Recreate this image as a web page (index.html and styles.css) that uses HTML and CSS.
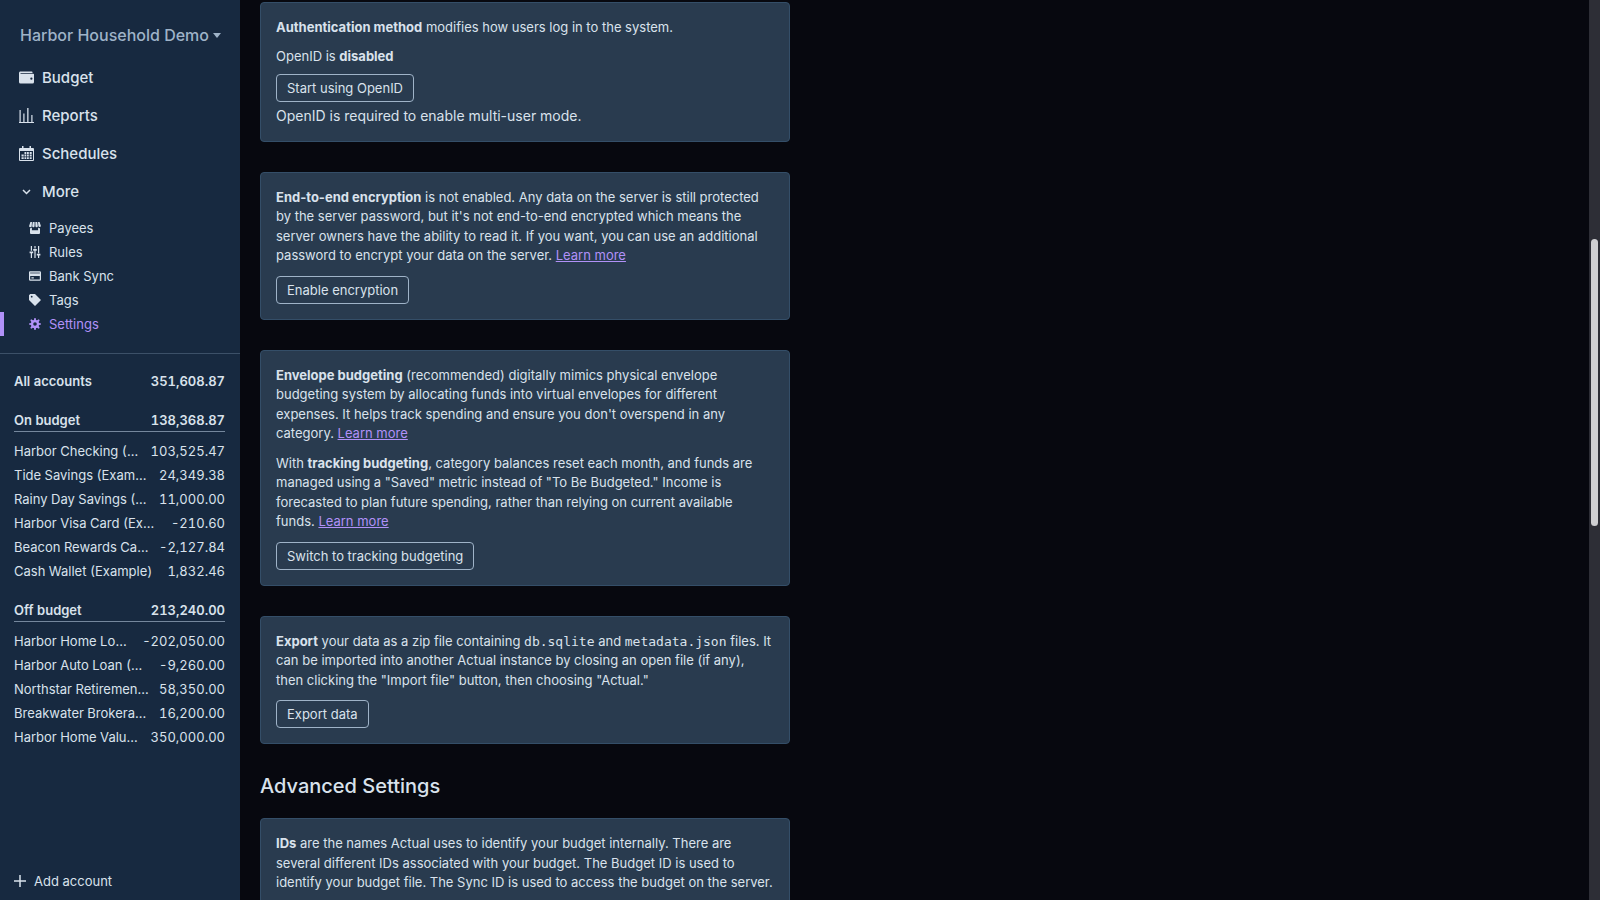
FILE: index.html
```html
<!DOCTYPE html>
<html lang="en">
<head>
  <meta charset="UTF-8" />
  <meta name="viewport" content="width=device-width, initial-scale=1.0" />
  <title>Settings - Actual</title>
  <link rel="stylesheet" href="styles.css">
</head>
<body>
  <aside class="sidebar">
    <button class="budget-name">
      Harbor Household Demo
      <svg width="8" height="5" viewBox="0 0 8 5"><path d="M0 0h8L4 5z" /></svg>
    </button>

    <nav>
      <a class="nav-item" href="#budget">
        <svg width="15" height="15" viewBox="0 0 20 20"><path fill-rule="evenodd" d="M0 4c0-1.1.9-2 2-2h15a1 1 0 0 1 1 1v1H2v1h17a1 1 0 0 1 1 1v10a2 2 0 0 1-2 2H2a2 2 0 0 1-2-2V4zm16.5 9a1.5 1.5 0 1 0 0-3 1.5 1.5 0 0 0 0 3z" /></svg>
        Budget
      </a>
      <a class="nav-item" href="#reports">
        <svg width="15" height="15" viewBox="0 0 15 15"><path d="M0 14h15v1H0zM.5 2h1.2v12H.5zM4.300 5.500h1.200V14H4.300zM8.200 0h1.300v14H8.200zM12.300 7h1.200v7h-1.200z" /></svg>
        Reports
      </a>
      <a class="nav-item" href="#schedules">
        <svg width="15" height="15" viewBox="0 0 15 15"><path fill-rule="evenodd" d="M3 0h1.500v2h6V0H12v2h2a1 1 0 0 1 1 1v11a1 1 0 0 1-1 1H1a1 1 0 0 1-1-1V3a1 1 0 0 1 1-1h2zM1 5v9h13V5z" /><path d="M5.500 6h1.800v2H5.500zM8 6h1.800v2H8zM10.700 6h2v2h-2zM2.500 8.600h2.200v1.900H2.500zM5.500 8.600h1.800v1.900H5.500zM8 8.600h1.800v1.900H8zM10.700 8.600h2v1.900h-2zM2.500 11.200h2.200v1.800H2.500zM5.500 11.200h1.800v1.800H5.500zM8 11.200h1.800v1.800H8zM10.700 11.200h2v1.800h-2z" /></svg>
        Schedules
      </a>
      <button class="nav-item">
        <svg width="15" height="15" viewBox="0 0 15 15"><path class="stroke" d="M4 6l3.500 3.500L11 6" /></svg>
        More
      </button>
      <div class="sub-nav">
        <a class="sub-item" href="#payees">
          <svg width="12" height="12" viewBox="0 0 12 12"><path d="M1.400 0h1.600L2.700 4a1.300 1.300 0 0 1-2.600 0zM3.800 0h1.800v4a1.200 1.200 0 0 1-2.400 0zM6.400 0h1.800l.6 4a1.200 1.200 0 0 1-2.400 0zM9 0h1.600l1.300 4a1.300 1.300 0 0 1-2.500 0zM1 6.200c.8.100 1.300-.1 1.900-.6v2.600h6.200V5.600c.6.500 1.100.7 1.900.6V11a1 1 0 0 1-1 1H2a1 1 0 0 1-1-1z" /></svg>
          Payees
        </a>
        <a class="sub-item" href="#rules">
          <svg width="12" height="12" viewBox="0 0 20 20"><path d="M17 16v4h-2v-4h-2v-3h6v3h-2zM1 9h6v3H1V9zm6-4h6v3H7V5zM3 0h2v8H3V0zm12 0h2v12h-2V0zM9 0h2v4H9V0zM3 12h2v8H3v-8zm6-4h2v12H9V8z" /></svg>
          Rules
        </a>
        <a class="sub-item" href="#bank-sync">
          <svg width="12" height="12" viewBox="0 0 20 20"><path d="M18 6V4H2v2h16zm0 4H2v6h16v-6zM0 4c0-1.100.900-2 2-2h16a2 2 0 0 1 2 2v12a2 2 0 0 1-2 2H2a2 2 0 0 1-2-2V4zm4 8h4v2H4v-2z" /><path opacity=".5" d="M2 4h16v2H2z" /></svg>
          Bank Sync
        </a>
        <a class="sub-item" href="#tags">
          <svg width="12" height="12" viewBox="0 0 20 20"><path d="M0 10V2l2-2h8l10 10-10 10L0 10zm4.500-4a1.500 1.500 0 1 0 0-3 1.500 1.500 0 0 0 0 3z" /></svg>
          Tags
        </a>
        <a class="sub-item active" href="#settings">
          <svg width="12" height="12" viewBox="0 0 20 20"><path d="M3.940 6.500L2.220 3.640l1.420-1.420L6.500 3.940c.520-.300 1.100-.540 1.700-.700L9 0h2l.800 3.240c.600.160 1.180.400 1.700.700l2.860-1.720 1.420 1.420-1.720 2.860c.300.520.540 1.100.700 1.700L20 9v2l-3.240.800c-.160.600-.400 1.180-.700 1.700l1.720 2.860-1.420 1.420-2.860-1.720c-.520.300-1.100.540-1.700.700L11 20H9l-.800-3.240c-.600-.160-1.180-.400-1.700-.700l-2.860 1.720-1.420-1.420 1.720-2.860c-.300-.520-.540-1.100-.700-1.700L0 11V9l3.240-.800c.160-.600.400-1.180.700-1.700zM10 13a3 3 0 1 0 0-6 3 3 0 0 0 0 6z" /></svg>
          Settings
        </a>
      </div>
    </nav>

    <div class="accounts">
      <a class="account total" href="#all"><span class="name">All accounts</span><span>351,608.87</span></a>

      <a class="account total group" href="#on-budget"><span class="name">On budget</span><span>138,368.87</span></a>
      <a class="account" href="#a1"><span class="name">Harbor Checking (Example)</span><span>103,525.47</span></a>
      <a class="account" href="#a2"><span class="name">Tide Savings (Example)</span><span>24,349.38</span></a>
      <a class="account" href="#a3"><span class="name">Rainy Day Savings (Example)</span><span>11,000.00</span></a>
      <a class="account" href="#a4"><span class="name">Harbor Visa Card (Example)</span><span>-210.60</span></a>
      <a class="account" href="#a5"><span class="name">Beacon Rewards Card (Example)</span><span>-2,127.84</span></a>
      <a class="account" href="#a6"><span class="name">Cash Wallet (Example)</span><span>1,832.46</span></a>

      <a class="account total group" href="#off-budget"><span class="name">Off budget</span><span>213,240.00</span></a>
      <a class="account" href="#a7"><span class="name">Harbor Home Loan (Example)</span><span>-202,050.00</span></a>
      <a class="account" href="#a8"><span class="name">Harbor Auto Loan (Example)</span><span>-9,260.00</span></a>
      <a class="account" href="#a9"><span class="name">Northstar Retirement (Example)</span><span>58,350.00</span></a>
      <a class="account" href="#a10"><span class="name">Breakwater Brokerage (Example)</span><span>16,200.00</span></a>
      <a class="account" href="#a11"><span class="name">Harbor Home Value (Example)</span><span>350,000.00</span></a>
    </div>

    <button class="add-account">
      <svg width="12" height="12" viewBox="0 0 12 12"><path class="stroke" d="M6 0v12M0 6h12" /></svg>
      Add account
    </button>
  </aside>

  <main class="page">
    <section class="card">
      <p><strong>Authentication method</strong> modifies how users log in to the system.</p>
      <div class="status">OpenID is <strong>disabled</strong></div>
      <button class="button">Start using OpenID</button>
      <div class="note">OpenID is required to enable multi-user mode.</div>
    </section>

    <section class="card">
      <p><strong>End-to-end encryption</strong> is not enabled. Any data on the server is still protected by the server password, but it's not end-to-end encrypted which means the server owners have the ability to read it. If you want, you can use an additional password to encrypt your data on the server. <a href="#encryption">Learn more</a></p>
      <button class="button">Enable encryption</button>
    </section>

    <section class="card">
      <p><strong>Envelope budgeting</strong> (recommended) digitally mimics physical envelope budgeting system by allocating funds into virtual envelopes for different expenses. It helps track spending and ensure you don't overspend in any category. <a href="#envelope">Learn more</a></p>
      <p>With <strong>tracking budgeting</strong>, category balances reset each month, and funds are managed using a "Saved" metric instead of "To Be Budgeted." Income is forecasted to plan future spending, rather than relying on current available funds. <a href="#tracking">Learn more</a></p>
      <button class="button">Switch to tracking budgeting</button>
    </section>

    <section class="card">
      <p><strong>Export</strong> your data as a zip file containing <code>db.sqlite</code> and <code>metadata.json</code> files. It can be imported into another Actual instance by closing an open file (if any), then clicking the "Import file" button, then choosing "Actual."</p>
      <button class="button">Export data</button>
    </section>

    <h2>Advanced Settings</h2>

    <section class="card">
      <p><strong>IDs</strong> are the names Actual uses to identify your budget internally. There are several different IDs associated with your budget. The Budget ID is used to identify your budget file. The Sync ID is used to access the budget on the server.</p>
    </section>
  </main>

  <div class="scroll-track"><div class="scroll-thumb"></div></div>
</body>
</html>
```
FILE: styles.css
```css
* {
  box-sizing: border-box;
}

body {
  margin: 0;
  height: 100vh;
  display: flex;
  overflow: hidden;
  background: #07080f;
  color: #d9e2ec;
  font-family: Inter, "Liberation Sans", sans-serif;
  font-size: 13px;
}

button {
  font: inherit;
  color: inherit;
  background: none;
  border: none;
  padding: 0;
  text-align: left;
}

svg {
  fill: currentColor;
  flex-shrink: 0;
}

.stroke {
  fill: none;
  stroke: currentColor;
  stroke-width: 1.5;
}

.sidebar {
  width: 240px;
  flex-shrink: 0;
  display: flex;
  flex-direction: column;
  background: #172940;
}

.sidebar a {
  color: inherit;
  text-decoration: none;
}

.budget-name {
  display: flex;
  align-items: center;
  gap: 4px;
  height: 30px;
  margin: 20px 0 8px 20px;
  font-size: 16px;
  font-weight: 500;
  color: #9fb3c8;
}

.nav-item {
  display: flex;
  align-items: center;
  gap: 8px;
  width: 100%;
  height: 38px;
  padding-left: 19px;
  font-size: 15px;
  font-weight: 500;
}

.sub-nav {
  padding: 6px 0 17px;
  border-bottom: 1px solid #3c5068;
}

.sub-item {
  display: flex;
  align-items: center;
  gap: 8px;
  height: 24px;
  padding-left: 25px;
  border-left: 4px solid transparent;
}

.sidebar .active {
  color: #b191f8;
  border-left-color: #b191f8;
}

.accounts {
  flex: 1;
  padding: 15px 15px 0 14px;
}

.account {
  display: flex;
  align-items: center;
  gap: 10px;
  height: 24px;
  font-variant-numeric: tabular-nums;
}

.account .name {
  flex: 1;
  overflow: hidden;
  white-space: nowrap;
  text-overflow: ellipsis;
}

.total {
  font-weight: 600;
}

.group {
  margin: 15px 0 7px;
  border-bottom: 1px solid #75879d;
}

.add-account {
  display: flex;
  align-items: center;
  gap: 8px;
  height: 38px;
  padding-left: 14px;
}

.page {
  flex: 1;
  padding: 2px 20px;
  overflow: hidden;
}

.card {
  max-width: 530px;
  margin-bottom: 30px;
  padding: 15px;
  border: 1px solid #344e68;
  border-radius: 4px;
  background: #293b4f;
}

.card p {
  margin: 0 0 10px;
  line-height: 1.5;
}

.card a {
  color: #b191f8;
}

code {
  font-family: "DejaVu Sans Mono", monospace;
  font-size: 13px;
}

.button {
  height: 28px;
  padding: 0 10px;
  border: 1px solid #9fb3c8;
  border-radius: 4px;
}

.status {
  margin-bottom: 10px;
  line-height: 16px;
}

.note {
  margin: 5px 0 2px;
  font-size: 14px;
  line-height: 17px;
}

h2 {
  margin: 0 0 20px;
  font-size: 20px;
  font-weight: 500;
  line-height: 24px;
}

.scroll-track {
  width: 11px;
  padding: 239px 2px 0;
  background: #2d2e36;
}

.scroll-thumb {
  height: 287px;
  border-radius: 4px;
  background: #cfcfd2;
}
```
